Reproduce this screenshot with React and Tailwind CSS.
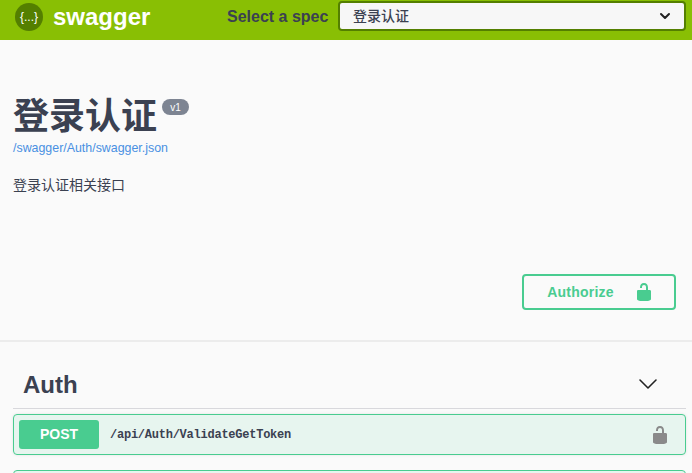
import { ChevronDown } from "lucide-react";

const SANS = "font-['Liberation_Sans','Noto_Sans_CJK_SC',sans-serif]";

function Lock({ className }) {
  return (
    <svg viewBox="0 0 20 20" className={className} fill="currentColor">
      <path d="M15.8 8H14V5.6C14 2.703 12.665 1 10 1 7.334 1 6 2.703 6 5.6V6h2v-.801C8 3.754 8.797 3 10 3c1.203 0 2 .754 2 2.199V8H4c-.553 0-1 .646-1 1.199V17c0 .549.428 1.139.951 1.307l1.197.387C5.672 18.861 6.55 19 7.1 19h5.8c.549 0 1.428-.139 1.951-.307l1.196-.387c.524-.167.953-.757.953-1.306V9.199C17 8.646 16.352 8 15.8 8z" />
    </svg>
  );
}

function Topbar() {
  return (
    <div className="h-10 bg-[#89bf04] flex items-center pl-[15px] pr-[6px]">
      <div className="w-7 h-7 -mt-[6px] rounded-full bg-[#547f00] flex items-center justify-center text-white text-[12px] font-['Liberation_Sans',sans-serif]">
        {"{...}"}
      </div>
      <span className={`${SANS} ml-[10px] -mt-[6px] text-[24px] font-bold text-white w-[174px]`}>swagger</span>
      <span className={`${SANS} text-base font-bold text-[#3b4151] -mt-[6px] w-[112px]`}>Select a spec</span>
      <div className={`${SANS} -ml-px -mt-[8px] flex-1 h-[30px] bg-[#f7f7f7] border-2 border-[#547f00] rounded flex items-center justify-between pl-[13px] pr-[11px] text-[14px] font-medium text-[#3b4151]`}>
        <span>登录认证</span>
        <ChevronDown className="w-4 h-4 text-[#222]" strokeWidth={3} />
      </div>
    </div>
  );
}

function Info() {
  return (
    <div className={`${SANS} pt-[53px] pl-[13px] h-[160px]`}>
      <div className="flex items-start">
        <h1 className="text-[36px] leading-[48px] font-bold text-[#3b4151]">登录认证</h1>
        <span className="ml-[5px] mt-[6px] h-4 w-[27px] rounded-full bg-[#7d8492] text-white text-[10px] flex items-center justify-center">v1</span>
      </div>
      <a className="block text-[12.4px] leading-[14px] text-[#4990e2]">/swagger/Auth/swagger.json</a>
      <p className="mt-[21px] text-[14px] leading-[18px] text-[#3b4151]">登录认证相关接口</p>
    </div>
  );
}

function Operation() {
  return (
    <div className="h-[41px] border border-[#49cc90] rounded bg-[#49cc90]/10 flex items-center pl-[5px] pr-[15px] shadow-[0_0_3px_rgba(0,0,0,0.1)]">
      <span className={`${SANS} w-20 h-[29px] rounded-[3px] bg-[#49cc90] text-white text-[14px] font-bold flex items-center justify-center`}>POST</span>
      <span className="ml-[11px] flex-1 text-[12px] tracking-[-0.24px] font-bold text-[#3b4151] font-['Liberation_Mono',monospace]">/api/Auth/ValidateGetToken</span>
      <Lock className="w-5 h-5 text-[#8a8a8a]" />
    </div>
  );
}

export default function App() {
  return (
    <div className="h-[473px] overflow-hidden bg-[#fafafa]">
      <Topbar />
      <Info />
      <div className="flex justify-end pr-4 pt-[74px] pb-[30px] border-b-2 border-[#ececec]">
        <button className={`${SANS} w-[154px] h-9 border-2 border-[#49cc90] rounded flex items-center justify-center gap-[20px] pl-[3px] text-[14px] font-bold tracking-[0.2px] text-[#49cc90]`}>
          Authorize
          <Lock className="w-5 h-5" />
        </button>
      </div>
      <div className="mx-[6px] ml-[13px]">
        <div className="flex items-center justify-between h-[67px] pl-[10px] pr-[22px] border-b border-[#d8d8dc]">
          <span className={`${SANS} text-[24px] font-bold text-[#3b4151] mt-[20px]`}>Auth</span>
          <ChevronDown className="w-8 h-8 text-[#222] mt-[17px]" strokeWidth={1.2} />
        </div>
      </div>
      <div className="mx-[6px] ml-[13px] mt-[5px]">
        <Operation />
        <div className="mt-[15px] h-[41px] border border-[#49cc90] rounded bg-[#49cc90]/10" />
      </div>
    </div>
  );
}
